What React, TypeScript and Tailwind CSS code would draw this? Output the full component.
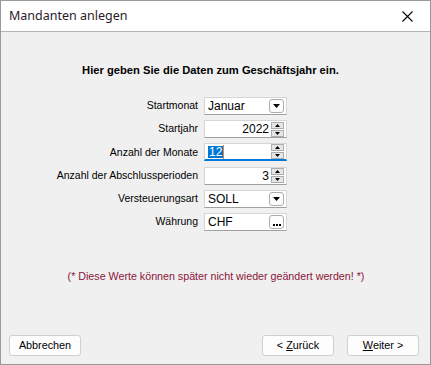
import React from "react";

function DropBtn() {
  return (
    <div className="w-[15px] h-[14px] border border-[#adadad] rounded-[3px] bg-[#fdfdfd] flex items-center justify-center">
      <svg width="7" height="4" viewBox="0 0 7 4">
        <path d="M0 0 H7 L3.5 4 Z" fill="#000" />
      </svg>
    </div>
  );
}

function DotsBtn() {
  return (
    <div className="w-[15px] h-[14px] border border-[#adadad] rounded-[3px] bg-[#fdfdfd] flex items-end justify-center pb-[2px] gap-[1px]">
      <div className="w-[2px] h-[2px] bg-black" />
      <div className="w-[2px] h-[2px] bg-black" />
      <div className="w-[2px] h-[2px] bg-black" />
    </div>
  );
}

function Spin() {
  return (
    <div className="flex flex-col gap-[1px]">
      <div className="w-[13px] h-[7px] border border-[#adadad] bg-[#e6e6e6] flex items-center justify-center">
        <svg width="5" height="3" viewBox="0 0 5 3">
          <path d="M0 3 H5 L2.5 0 Z" fill="#000" />
        </svg>
      </div>
      <div className="w-[13px] h-[7px] border border-[#adadad] bg-[#e6e6e6] flex items-center justify-center">
        <svg width="5" height="3" viewBox="0 0 5 3">
          <path d="M0 0 H5 L2.5 3 Z" fill="#000" />
        </svg>
      </div>
    </div>
  );
}

function Field({
  value,
  align = "left",
  right,
  focused = false,
}: {
  value: string;
  align?: "left" | "right";
  right: React.ReactNode;
  focused?: boolean;
}) {
  return (
    <div
      className={
        "w-[83px] h-[18px] bg-white flex items-center pl-[3px] pr-[2px] gap-[2px] " +
        (focused
          ? "border-t border-x border-[#d6d6d6] border-b-2 border-b-[#0078d7]"
          : "border border-[#d6d6d6] border-b-[#a0a0a0]")
      }
    >
      <div className={"flex-1 text-[12px] leading-none text-black " + (align === "right" ? "text-right" : "")}>
        {focused ? (
          <span className="inline-flex items-center">
            <span className="bg-[#0078d7] text-white px-[1px]">{value}</span>
            <span className="w-[1px] h-[14px] bg-[#f08020]" />
          </span>
        ) : (
          value
        )}
      </div>
      {right}
    </div>
  );
}

function Btn({ children }: { children: React.ReactNode }) {
  return (
    <div className="h-[21px] w-[72px] border border-[#d0d0d0] rounded-[3px] bg-[#fdfdfd] flex items-center justify-center text-[10.8px] text-black">
      {children}
    </div>
  );
}

export default function App() {
  const rows: { label: string; field: React.ReactNode }[] = [
    { label: "Startmonat", field: <Field value="Januar" right={<DropBtn />} /> },
    { label: "Startjahr", field: <Field value="2022" align="right" right={<Spin />} /> },
    { label: "Anzahl der Monate", field: <Field value="12" focused right={<Spin />} /> },
    { label: "Anzahl der Abschlussperioden", field: <Field value="3" align="right" right={<Spin />} /> },
    { label: "Versteuerungsart", field: <Field value="SOLL" right={<DropBtn />} /> },
    { label: "Währung", field: <Field value="CHF" right={<DotsBtn />} /> },
  ];

  return (
    <div
      className="w-[431px] h-[365px] flex flex-col border border-[#9a9a9a] bg-[#f0f0f0]"
      style={{ fontFamily: '"Liberation Sans", Arial, sans-serif' }}
    >
      {/* title bar */}
      <div className="h-[31px] bg-white border-b border-[#b4b4b4] flex items-center justify-between pl-[8px] pr-[17px]">
        <span className="text-[12.5px] text-[#2a1a2a]" style={{ fontFamily: '"Noto Sans", sans-serif' }}>
          Mandanten anlegen
        </span>
        <svg width="11" height="11" viewBox="0 0 11 11">
          <path d="M0.5 0.5 L10.5 10.5 M10.5 0.5 L0.5 10.5" stroke="#000" strokeWidth="1.1" />
        </svg>
      </div>

      {/* content */}
      <div className="flex-1 flex flex-col">
        <div className="mt-[30px] text-center text-[11.2px] font-bold text-black pr-[10px]">
          Hier geben Sie die Daten zum Geschäftsjahr ein.
        </div>

        <div className="mt-[18px] grid grid-cols-[197px_83px] gap-x-[6px] gap-y-[5.3px]">
          {rows.map((r) => (
            <React.Fragment key={r.label}>
              <div className="h-[18px] flex items-center justify-end text-[10.5px] text-black">{r.label}</div>
              {r.field}
            </React.Fragment>
          ))}
        </div>

        <div className="mt-[37px] text-center text-[10.7px] text-[#8b1538] pl-[1px]">
          (* Diese Werte können später nicht wieder geändert werden! *)
        </div>

        <div className="mt-auto mb-[8px] flex items-center pl-[8px] pr-[11px]">
          <Btn>Abbrechen</Btn>
          <div className="flex-1" />
          <Btn>
            &lt; <span className="underline ml-[3px]">Z</span>urück
          </Btn>
          <div className="w-[13px]" />
          <Btn>
            <span className="underline">W</span>eiter &gt;
          </Btn>
        </div>
      </div>
    </div>
  );
}
